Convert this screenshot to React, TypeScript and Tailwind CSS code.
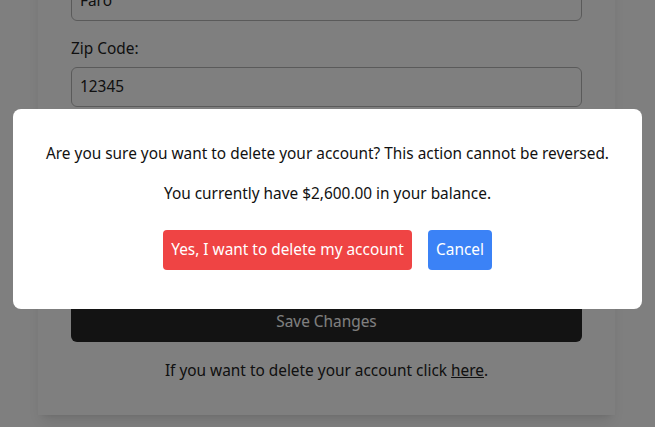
import React from 'react'

const fields = [
  { label: 'City:', value: 'Faro' },
  { label: 'Zip Code:', value: '12345' },
  { label: 'Country:', value: 'Portugal' },
  { label: 'Phone:', value: '912345678' },
]

const App = () => {
  return (
    <div className="relative h-[427px] overflow-hidden bg-white font-['Noto_Sans',sans-serif] text-[15.4px] text-[#222]">
      <div className="-mt-[81px] ml-[38px] w-[577px] bg-white px-[33px] pt-8 pb-8 shadow-lg">
        <div className="flex flex-col gap-4">
          {fields.map((field, index) => (
            <div key={index} className="flex flex-col gap-1.5">
              <label className="leading-6">{field.label}</label>
              <div className="h-10 rounded-md border border-[#b5b5b5] px-2 leading-[38px]">
                {field.value}
              </div>
            </div>
          ))}
        </div>
        <button className="mt-[23px] h-10 w-full rounded-md bg-[#262626] text-white">
          Save Changes
        </button>
        <p className="mt-[17px] text-center leading-6">
          If you want to delete your account click <span className="underline">here</span>.
        </p>
      </div>

      <div className="absolute inset-0 bg-black/50 px-[13px] pt-[109px]">
        <div className="flex flex-col items-center rounded-lg bg-white px-4 pt-[33px] pb-[39px] text-[#111]">
          <p className="whitespace-nowrap leading-6">
            Are you sure you want to delete your account? This action cannot be reversed.
          </p>
          <p className="mt-4 leading-6">You currently have $2,600.00 in your balance.</p>
          <div className="mt-6 flex gap-4">
            <button className="h-10 w-[249px] rounded bg-[#ef4444] text-white">
              Yes, I want to delete my account
            </button>
            <button className="h-10 w-16 rounded bg-[#3b82f6] text-white">Cancel</button>
          </div>
        </div>
      </div>
    </div>
  )
}

export default App
